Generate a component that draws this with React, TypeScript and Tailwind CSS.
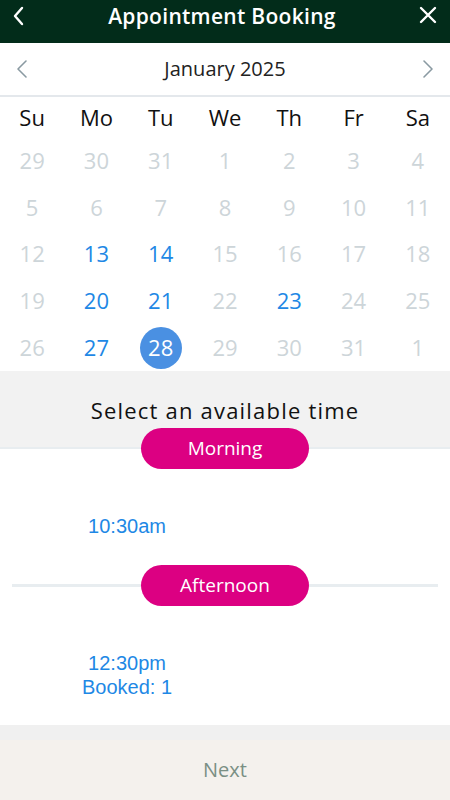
import React from 'react';

const weekdays = ['Su', 'Mo', 'Tu', 'We', 'Th', 'Fr', 'Sa'];

// [day, state] state: 0 = disabled, 1 = available, 2 = selected
const days: [number, number][] = [
  [29, 0], [30, 0], [31, 0], [1, 0], [2, 0], [3, 0], [4, 0],
  [5, 0], [6, 0], [7, 0], [8, 0], [9, 0], [10, 0], [11, 0],
  [12, 0], [13, 1], [14, 1], [15, 0], [16, 0], [17, 0], [18, 0],
  [19, 0], [20, 1], [21, 1], [22, 0], [23, 1], [24, 0], [25, 0],
  [26, 0], [27, 1], [28, 2], [29, 0], [30, 0], [31, 0], [1, 0],
];

const Pill = ({ label }: { label: string }) => (
  <div className="w-[168px] h-[41px] rounded-full bg-[#dc0082] text-white text-[19px] flex items-center justify-center shrink-0">
    {label}
  </div>
);

const App = () => {
  return (
    <div className="w-[450px] h-[800px] flex flex-col bg-white font-['Open_Sans',sans-serif] overflow-hidden">
      {/* header */}
      <div className="h-[43px] bg-[#022c1a] flex items-start justify-between px-[12px] pt-[5px] shrink-0">
        <svg width="14" height="22" viewBox="0 0 14 22" fill="none" stroke="white" strokeWidth="2.4" strokeLinecap="round" strokeLinejoin="round">
          <path d="M10 3 L3 11 L10 19" />
        </svg>
        <h1 className="text-white text-[21px] leading-[22px] font-semibold tracking-[0.3px]">Appointment Booking</h1>
        <svg width="20" height="22" viewBox="0 0 20 22" fill="none" stroke="white" strokeWidth="2.4" strokeLinecap="round">
          <path d="M3 3 L17 17 M17 3 L3 17" />
        </svg>
      </div>

      {/* month bar */}
      <div className="h-[54px] flex items-center justify-between px-[16px] border-b-2 border-[#e4e8ec] shrink-0">
        <svg width="12" height="20" viewBox="0 0 12 20" fill="none" stroke="#8a9aa2" strokeWidth="1.6" strokeLinecap="round" strokeLinejoin="round">
          <path d="M10 2 L2 10 L10 18" />
        </svg>
        <span className="text-[20px] text-[#222]">January 2025</span>
        <svg width="12" height="20" viewBox="0 0 12 20" fill="none" stroke="#8a9aa2" strokeWidth="1.6" strokeLinecap="round" strokeLinejoin="round">
          <path d="M2 2 L10 10 L2 18" />
        </svg>
      </div>

      {/* calendar */}
      <div className="grid grid-cols-7 h-[40px] items-center text-[22px] text-[#111] shrink-0">
        {weekdays.map((d) => (
          <div key={d} className="text-center">{d}</div>
        ))}
      </div>
      <div className="grid grid-cols-7 auto-rows-[46.8px] text-[22px] shrink-0">
        {days.map(([n, s], i) => (
          <div key={i} className="flex items-center justify-center">
            {s === 2 ? (
              <span className="w-[42px] h-[42px] rounded-full bg-[#4a90e2] text-white flex items-center justify-center">{n}</span>
            ) : (
              <span className={s === 1 ? 'text-[#1e88e5]' : 'text-[#cdd5d9]'}>{n}</span>
            )}
          </div>
        ))}
      </div>

      {/* time heading */}
      <div className="h-[57px] bg-[#f2f2f2] flex items-end justify-center pb-[3px] shrink-0">
        <span className="text-[22px] leading-[30px] text-[#111] tracking-[1.2px]">Select an available time</span>
      </div>
      <div className="h-[41px] relative flex items-center justify-center bg-[linear-gradient(to_bottom,#f2f2f2_50%,#ffffff_50%)] shrink-0">
        <div className="absolute left-0 right-0 top-[19px] h-[2px] bg-[#e8edf0]" />
        <div className="relative">
          <Pill label="Morning" />
        </div>
      </div>

      <div className="pt-[45px] pb-[27px] font-['Liberation_Sans',Arial,sans-serif] text-[20px] leading-[24px] text-[#1e88e5] shrink-0">
        <div className="ml-[52px] w-[150px] text-center">10:30am</div>
      </div>

      <div className="h-[41px] flex items-center px-[12px] shrink-0">
        <div className="flex-1 h-[3px] bg-[#e8edf0]" />
        <Pill label="Afternoon" />
        <div className="flex-1 h-[3px] bg-[#e8edf0]" />
      </div>

      <div className="pt-[45px] pb-[26px] font-['Liberation_Sans',Arial,sans-serif] text-[20px] leading-[24px] text-[#1e88e5] shrink-0">
        <div className="ml-[52px] w-[150px] text-center">
          <div>12:30pm</div>
          <div>Booked: 1</div>
        </div>
      </div>

      {/* footer */}
      <div className="h-[15px] bg-[#f0f0f0] shrink-0" />
      <div className="flex-1 bg-[#f4f1ed] flex items-center justify-center">
        <span className="text-[20px] text-[#7a8f84]">Next</span>
      </div>
    </div>
  );
};

export default App;
